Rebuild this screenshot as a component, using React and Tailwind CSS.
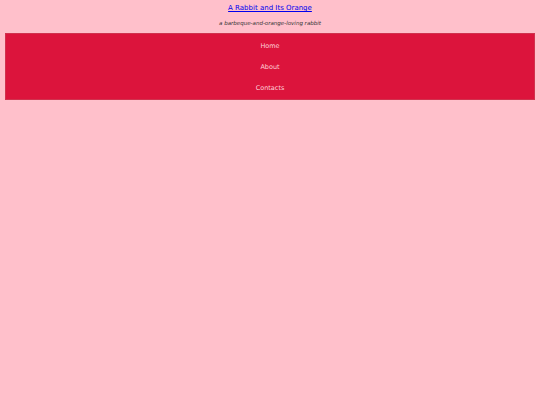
export default function App() {
  const links = ['Home', 'About', 'Contacts'];
  return (
    <div className="min-h-[405px] bg-[#ffc0cb] px-[5px] pt-[3px] font-['DejaVu_Sans',Verdana,sans-serif] text-[7px] leading-[10px]">
      <header className="text-center">
        <a href="#" className="block text-[7px] leading-[10px] text-[#0000ee] underline">A Rabbit and Its Orange</a>
        <p className="mt-[6px] text-[5.5px] italic leading-[8px] text-[#333]">a barbeque-and-orange-loving rabbit</p>
      </header>
      <nav className="mt-[6px] border border-[#d0324e] bg-[#dc143c] py-[1px]">
        <ul className="flex flex-col">
          {links.map((l) => (
            <li key={l} className="h-[21px] flex items-center justify-center text-[6.5px] text-[#ffd0d8]">{l}</li>
          ))}
        </ul>
      </nav>
    </div>
  );
}
